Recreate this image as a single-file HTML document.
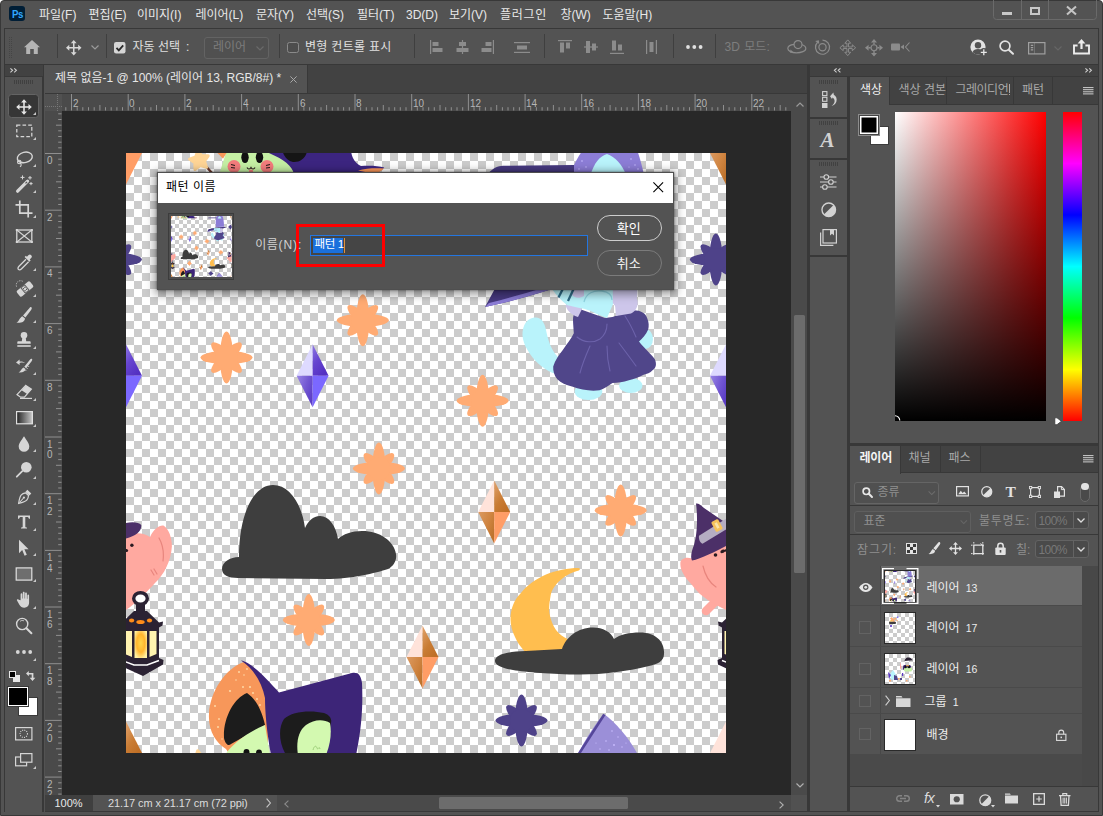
<!DOCTYPE html>
<html lang="ko"><head><meta charset="utf-8"><title>Photoshop - 패턴 이름</title>
<style>
html,body{margin:0;padding:0;background:#fff}
body{width:1103px;height:816px;overflow:hidden;position:relative;font-family:"Liberation Sans","Noto Sans CJK KR",sans-serif;font-size:12px;color:#ddd}
#win{position:absolute;left:0;top:0;width:1103px;height:816px;overflow:hidden}
#win div{position:absolute;box-sizing:border-box}
#win svg{position:absolute;overflow:visible}
#win .t{white-space:nowrap;line-height:1.2}
#win .rl{font-size:11.5px;color:#b6b6b6;line-height:1;transform:scaleX(.86);transform-origin:0 0}
</style></head>
<body>
<div id="win">
<div style="left:0px;top:0px;width:1103px;height:816px;background:#535353;border:1px solid #383838;border-right-width:1.500px;border-radius:4px 4px 0 0"></div>
<div style="left:9px;top:6px;width:16px;height:15px;background:#001e36;border-radius:3px"><div class="t" style="left:3.300px;top:2px;font-size:10.500px;font-weight:bold;color:#31a8ff;letter-spacing:-0.5px;transform:scaleX(.92);transform-origin:0 0">Ps</div></div>
<div class="t" style="left:39px;top:7.8px;font-size:12px;color:#e8e8e8;">파일(F)</div>
<div class="t" style="left:88.5px;top:7.8px;font-size:12px;color:#e8e8e8;">편집(E)</div>
<div class="t" style="left:137px;top:7.8px;font-size:12px;color:#e8e8e8;">이미지(I)</div>
<div class="t" style="left:195.5px;top:7.8px;font-size:12px;color:#e8e8e8;">레이어(L)</div>
<div class="t" style="left:256px;top:7.8px;font-size:12px;color:#e8e8e8;">문자(Y)</div>
<div class="t" style="left:306px;top:7.8px;font-size:12px;color:#e8e8e8;">선택(S)</div>
<div class="t" style="left:357px;top:7.8px;font-size:12px;color:#e8e8e8;">필터(T)</div>
<div class="t" style="left:406px;top:7.8px;font-size:12px;color:#e8e8e8;">3D(D)</div>
<div class="t" style="left:449px;top:7.8px;font-size:12px;color:#e8e8e8;">보기(V)</div>
<div class="t" style="left:500px;top:7.8px;font-size:12px;color:#e8e8e8;letter-spacing:0.7px">플러그인</div>
<div class="t" style="left:560.5px;top:7.8px;font-size:12px;color:#e8e8e8;">창(W)</div>
<div class="t" style="left:602.5px;top:7.8px;font-size:12px;color:#e8e8e8;">도움말(H)</div>
<div style="left:993px;top:-1px;width:103.5px;height:21px;border:1px solid #6a6a6a;border-radius:0 0 3.500px 3.500px"></div>
<div style="left:1021px;top:0px;width:1px;height:19px;background:#6a6a6a"></div>
<div style="left:1048px;top:0px;width:1px;height:19px;background:#6a6a6a"></div>
<div style="left:1001.5px;top:11.5px;width:10.5px;height:3px;background:#c8c8c8"></div>
<div style="left:1029.5px;top:7px;width:10.5px;height:7.5px;border:2px solid #c8c8c8;border-top-width:2.5px"></div>
<svg style="left:1066px;top:6px" width="11" height="9" viewBox="0 0 11 9"><path d="M1 0.5L10 8.5M10 0.5L1 8.5" stroke="#c4c4c4" stroke-width="2.100" fill="none"/></svg>
<div style="left:4px;top:28px;width:1095px;height:37px;border:1px solid #383838;background:#535353"></div>
<svg style="left:9px;top:37px" width="3" height="21" viewBox="0 0 3 21"><path d="M0.5 0v21M2.5 0v21" stroke="#454545" stroke-width="1" stroke-dasharray="1 1"/></svg>
<div style="left:57px;top:34px;width:1px;height:24px;background:#3f3f3f"></div>
<div style="left:106px;top:34px;width:1px;height:24px;background:#3f3f3f"></div>
<div style="left:279px;top:34px;width:1px;height:24px;background:#3f3f3f"></div>
<div style="left:414px;top:34px;width:1px;height:24px;background:#3f3f3f"></div>
<div style="left:543.5px;top:34px;width:1px;height:24px;background:#3f3f3f"></div>
<div style="left:672.5px;top:34px;width:1px;height:24px;background:#3f3f3f"></div>
<div style="left:715px;top:34px;width:1px;height:24px;background:#3f3f3f"></div>
<svg style="left:24px;top:40px" width="16" height="14" viewBox="0 0 16 14"><path d="M8 0L16 7.2h-2.2V14H9.8V9H6.2v5H2.2V7.2H0z" fill="#b4b4b4"/></svg>
<svg style="left:65.5px;top:39.5px" width="15.5" height="15.5" viewBox="0 0 16 16"><path d="M8 0l3 3.4H8.8v3.8h3.8V5L16 8l-3.4 3V8.8H8.8v3.8H11L8 16l-3-3.4h2.2V8.8H3.4V11L0 8l3.4-3v2.2h3.8V3.4H5z" fill="#d8d8d8"/></svg>
<svg style="left:90.5px;top:45px" width="8" height="5" viewBox="0 0 8 5"><path d="M0.5 0.5L4 4l3.5-3.5" stroke="#9a9a9a" stroke-width="1.2" fill="none"/></svg>
<svg style="left:114px;top:41.5px" width="11.5" height="11.5" viewBox="0 0 12 12"><rect width="12" height="12" rx="2.2" fill="#d6d6d6"/><path d="M2.6 6.2l2.4 2.5 4.6-5.2" stroke="#2a2a2a" stroke-width="1.9" fill="none"/></svg>
<div class="t" style="left:132.500px;top:39.500px;font-size:12px;color:#e0e0e0;">자동 선택</div>
<div class="t" style="left:186px;top:39.500px;font-size:12px;color:#e0e0e0;">:</div>
<div style="left:204px;top:37px;width:64.5px;height:21.5px;border:1px solid #636363;border-radius:3px;background:#505050"></div>
<div class="t" style="left:213px;top:40px;font-size:12px;color:#7c7c7c;">레이어</div>
<svg style="left:256px;top:45.5px" width="8" height="5" viewBox="0 0 8 5"><path d="M0.5 0.5L4 4l3.5-3.5" stroke="#6a6a6a" stroke-width="1.2" fill="none"/></svg>
<div style="left:287px;top:41.5px;width:11.5px;height:11.5px;border:1px solid #8a8a8a;border-radius:2.5px;background:#4d4d4d"></div>
<div class="t" style="left:305px;top:39.500px;font-size:12px;color:#e0e0e0;letter-spacing:0.3px">변형 컨트롤 표시</div>
<svg style="left:430px;top:40px" width="13" height="14" viewBox="0 0 13 14"><rect x="0" y="0" width="1.2" height="14" fill="#8c8c8c"/><rect x="2.5" y="2" width="6" height="4" fill="#8c8c8c"/><rect x="2.5" y="8" width="10" height="4" fill="#8c8c8c"/></svg>
<svg style="left:456px;top:40px" width="13" height="14" viewBox="0 0 13 14"><rect x="5.9" y="0" width="1.2" height="14" fill="#8c8c8c"/><rect x="3" y="2" width="7" height="4" fill="#8c8c8c"/><rect x="0.5" y="8" width="12" height="4" fill="#8c8c8c"/></svg>
<svg style="left:481px;top:40px" width="13" height="14" viewBox="0 0 13 14"><rect x="11.8" y="0" width="1.2" height="14" fill="#8c8c8c"/><rect x="4.5" y="2" width="6" height="4" fill="#8c8c8c"/><rect x="0.5" y="8" width="10" height="4" fill="#8c8c8c"/></svg>
<svg style="left:514px;top:42px" width="16" height="11" viewBox="0 0 16 11"><rect x="0" y="0" width="16" height="1.2" fill="#8c8c8c"/><rect x="3" y="3.5" width="10" height="4" fill="#8c8c8c"/><rect x="0" y="9.8" width="16" height="1.2" fill="#8c8c8c"/></svg>
<svg style="left:558px;top:40px" width="14" height="14" viewBox="0 0 14 14"><rect x="0" y="0" width="14" height="1.2" fill="#8c8c8c"/><rect x="2" y="2.5" width="4" height="10" fill="#8c8c8c"/><rect x="8" y="2.5" width="4" height="6" fill="#8c8c8c"/></svg>
<svg style="left:584px;top:40px" width="14" height="14" viewBox="0 0 14 14"><rect x="0" y="6.4" width="14" height="1.2" fill="#8c8c8c"/><rect x="2" y="1" width="4" height="12" fill="#8c8c8c"/><rect x="8" y="3.5" width="4" height="7" fill="#8c8c8c"/></svg>
<svg style="left:610px;top:40px" width="14" height="14" viewBox="0 0 14 14"><rect x="0" y="12.8" width="14" height="1.2" fill="#8c8c8c"/><rect x="2" y="0.5" width="4" height="10" fill="#8c8c8c"/><rect x="8" y="4.5" width="4" height="6" fill="#8c8c8c"/></svg>
<svg style="left:645.5px;top:40px" width="11" height="14" viewBox="0 0 11 14"><rect x="0" y="0" width="1.2" height="14" fill="#8c8c8c"/><rect x="3.5" y="2" width="4" height="10" fill="#8c8c8c"/><rect x="9.8" y="0" width="1.2" height="14" fill="#8c8c8c"/></svg>
<svg style="left:685.5px;top:45px" width="17" height="4" viewBox="0 0 17 4"><circle cx="2" cy="2" r="1.9" fill="#e0e0e0"/><circle cx="8.3" cy="2" r="1.9" fill="#e0e0e0"/><circle cx="14.6" cy="2" r="1.9" fill="#e0e0e0"/></svg>
<div class="t" style="left:724.500px;top:39.500px;font-size:12px;color:#7e7e7e;word-spacing:1px">3D 모드</div>
<div class="t" style="left:766.500px;top:39.500px;font-size:12px;color:#7e7e7e;">:</div>
<svg style="left:786.500px;top:40px" width="19.500" height="14" viewBox="0 0 19.500 14" fill="none" stroke="#8b8b8b" stroke-width="1.200"><circle cx="11" cy="4.600" r="4"/><path d="M7.200 4.400C3.500 4.800 .8 6.600 .8 8.600c0 2.400 3.800 4.200 8.600 4.200s9.400-1.600 9.400-4.400c0-1.500-1.400-2.800-3.800-3.600"/><path d="M3.500 9.500l-.4 3.300 3.300-.6z" fill="#8b8b8b" stroke="none"/></svg>
<svg style="left:813.500px;top:38.500px" width="17" height="16" viewBox="0 0 17 16" fill="none" stroke="#8b8b8b" stroke-width="1.200"><path d="M3.600 3.200A7 7 0 1 0 8.500 1.200"/><circle cx="8.500" cy="8.300" r="3.600"/><path d="M1.200 2l3.700-.8.300 3.700z" fill="#8b8b8b" stroke="none"/></svg>
<svg style="left:838.500px;top:38.500px" width="17.500" height="17.500" viewBox="0 0 16 16"><path d="M8 0l3 3.400H8.800v3.800h3.800V5L16 8l-3.400 3V8.800H8.800v3.800H11L8 16l-3-3.400h2.200V8.800H3.400V11L0 8l3.400-3v2.200h3.800V3.400H5z" fill="none" stroke="#8b8b8b" stroke-width="1" stroke-linejoin="round" transform="translate(.8 .8) scale(.9)"/></svg>
<svg style="left:865px;top:38.500px" width="18" height="17.500" viewBox="0 0 18 17.500" fill="#8b8b8b"><path d="M9 0l3 3.600H6zM9 17.500l3-3.600H6zM0 8.750l3.600-3v6zM18 8.750l-3.600-3v6z"/><circle cx="9" cy="8.750" r="3" fill="none" stroke="#8b8b8b" stroke-width="1.200"/><path d="M9 3.600v2M9 11.900v2M3.600 8.750h2M12.400 8.750h2" stroke="#8b8b8b" stroke-width="1.400"/></svg>
<svg style="left:890.500px;top:42px" width="19" height="10" viewBox="0 0 19 10"><rect x="0" y="1.500" width="9" height="7" rx="1" fill="#8b8b8b"/><path d="M9.500 5L13 2.500v5z" fill="#8b8b8b"/><path d="M18.500 .5L14.500 5l4 4.500" fill="none" stroke="#8b8b8b" stroke-width="1.100"/></svg>
<svg style="left:969.500px;top:38.500px" width="18" height="17.500" viewBox="0 0 18 17.500"><circle cx="8" cy="8" r="7.600" fill="#e2e2e2"/><circle cx="8" cy="6.200" r="3.200" fill="#535353"/><path d="M2.600 13.300c.6-2.400 2.800-3.300 5.400-3.300s4.800.9 5.400 3.300A7.500 7.500 0 0 1 8 15.600a7.500 7.500 0 0 1-5.400-2.300z" fill="#535353"/><circle cx="13.800" cy="13.300" r="4.200" fill="#535353"/><path d="M13.800 10.300v6M10.800 13.300h6" stroke="#e8e8e8" stroke-width="1.300"/></svg>
<svg style="left:999px;top:40px" width="15" height="14.500" viewBox="0 0 15 14.500"><circle cx="6" cy="6" r="4.900" fill="none" stroke="#e2e2e2" stroke-width="1.700"/><path d="M9.700 9.700l4.300 4" stroke="#e2e2e2" stroke-width="2" stroke-linecap="round"/></svg>
<svg style="left:1027.500px;top:41.500px" width="17.500" height="12.500" viewBox="0 0 17.500 12.500"><rect x=".6" y=".6" width="16.300" height="11.300" fill="none" stroke="#a0a0a0" stroke-width="1.200"/><path d="M2.800 3.300h2.400M2.800 5.600h2.400M2.800 7.900h2.400" stroke="#a0a0a0" stroke-width="1.200"/><path d="M6.500 .6v11.300" stroke="#a0a0a0" stroke-width="0.800" opacity=".5"/></svg>
<svg style="left:1053.500px;top:45.500px" width="8" height="5" viewBox="0 0 8 5"><path d="M.5.5L4 4 7.500.5" stroke="#666" stroke-width="1.200" fill="none"/></svg>
<svg style="left:1072.500px;top:38.500px" width="17" height="15.500" viewBox="0 0 17 15.500"><path d="M4.600 6.500H1v8h15v-8h-3.600" fill="none" stroke="#ececec" stroke-width="1.900"/><path d="M8.500 0L12.400 4.400H9.600V10H7.400V4.400H4.600z" fill="#ececec"/></svg>
<div style="left:4px;top:64px;width:40px;height:748px;border-left:1px solid #383838;border-right:2px solid #383838;background:#535353"></div>
<div style="left:5px;top:64px;width:38px;height:12px;background:#424242;border-top:1px solid #383838"></div>
<div style="left:5px;top:76px;width:38px;height:1px;background:#383838"></div>
<svg style="left:10px;top:68.3px" width="7.5" height="4.6" viewBox="0 0 7.5 4.6"><path d="M0.4 0.3L2.6 2.3 0.4 4.3M4.2 0.3L6.4 2.3 4.2 4.3" stroke="#d0d0d0" stroke-width="1.1" fill="none"/></svg>
<svg style="left:14px;top:80px" width="19" height="4" viewBox="0 0 19 4"><path d="M0 2h19" stroke="#404040" stroke-width="4" stroke-dasharray="1 1"/></svg>
<div style="left:7.7px;top:93.7px;width:31.6px;height:24.8px;background:#363636;border:1px solid #646464;border-radius:3.500px"></div>
<svg style="left:13.5px;top:96.5px" width="20" height="20" viewBox="0 0 20 20" fill="none" stroke="none"><path transform="translate(2.2,2.2) scale(0.975)" d="M8 0l3 3.4H8.8v3.8h3.8V5L16 8l-3.400 3V8.800H8.800v3.800H11L8 16l-3-3.400h2.200V8.800H3.400V11L0 8l3.400-3v2.200h3.800V3.400H5z" fill="#e6e6e6"/></svg>
<svg style="left:33px;top:112.0px" width="3" height="3" viewBox="0 0 3 3"><path d="M3 0v3H0z" fill="#c8c8c8"/></svg>
<svg style="left:13.5px;top:121.4px" width="20" height="20" viewBox="0 0 20 20" fill="none" stroke="none"><rect x="2.8" y="4" width="15" height="11.6" stroke="#d6d6d6" stroke-width="1.250" stroke-dasharray="3.6 2.1"/></svg>
<svg style="left:33px;top:136.9px" width="3" height="3" viewBox="0 0 3 3"><path d="M3 0v3H0z" fill="#c8c8c8"/></svg>
<svg style="left:13.5px;top:148.8px" width="20" height="20" viewBox="0 0 20 20" fill="none" stroke="none"><ellipse cx="10.8" cy="8.4" rx="7.6" ry="5.2" transform="rotate(-14 10.8 8.4)" stroke="#d6d6d6" stroke-width="1.4"/><circle cx="5.2" cy="13" r="1.7" stroke="#d6d6d6" stroke-width="1.1"/><path d="M6.4 14.2c1 1 1.2 2.400-.4 3.600" stroke="#d6d6d6" stroke-width="1.1"/></svg>
<svg style="left:33px;top:164.3px" width="3" height="3" viewBox="0 0 3 3"><path d="M3 0v3H0z" fill="#c8c8c8"/></svg>
<svg style="left:13.5px;top:174.0px" width="20" height="20" viewBox="0 0 20 20" fill="none" stroke="none"><path d="M3.600 17.200L13.600 7.200" stroke="#d6d6d6" stroke-width="3.2" stroke-linecap="round"/><path d="M11.500 9.300l1.500-1.500" stroke="#535353" stroke-width="1.200"/><path d="M8.500 1.400v4M6.500 3.400h4M16 2v3.600M14.200 3.800h3.600M17 8v3.200M15.400 9.600h3.200" stroke="#d6d6d6" stroke-width="1"/></svg>
<svg style="left:33px;top:189.5px" width="3" height="3" viewBox="0 0 3 3"><path d="M3 0v3H0z" fill="#c8c8c8"/></svg>
<svg style="left:13.5px;top:199.0px" width="20" height="20" viewBox="0 0 20 20" fill="none" stroke="none"><path d="M5.800 1.500v12.700h12.700M1.500 5.800h12.700v12.700" stroke="#d6d6d6" stroke-width="1.700"/></svg>
<svg style="left:33px;top:214.5px" width="3" height="3" viewBox="0 0 3 3"><path d="M3 0v3H0z" fill="#c8c8c8"/></svg>
<svg style="left:13.5px;top:225.8px" width="20" height="20" viewBox="0 0 20 20" fill="none" stroke="none"><rect x="2.800" y="4" width="15" height="12" stroke="#d6d6d6" stroke-width="1.300"/><path d="M2.800 4l15 12M17.800 4l-15 12" stroke="#d6d6d6" stroke-width="1.100"/><rect x="1.800" y="3" width="2" height="2" fill="#d6d6d6"/><rect x="16.800" y="3" width="2" height="2" fill="#d6d6d6"/><rect x="1.800" y="15" width="2" height="2" fill="#d6d6d6"/><rect x="16.800" y="15" width="2" height="2" fill="#d6d6d6"/></svg>
<svg style="left:13.5px;top:252.0px" width="20" height="20" viewBox="0 0 20 20" fill="none" stroke="none"><path d="M12 7.200L5 14.200c-1 1-1.400 2.400-.6 3.200s2.200.4 3.200-.6l7-7" stroke="#d6d6d6" stroke-width="1.300"/><path d="M10.600 5l4.800 4.800 1.300-1.300-1-1 1.700-1.700a2 2 0 0 0-2.800-2.800L12.900 4.700l-1-1z" fill="#d6d6d6"/></svg>
<svg style="left:33px;top:267.5px" width="3" height="3" viewBox="0 0 3 3"><path d="M3 0v3H0z" fill="#c8c8c8"/></svg>
<svg style="left:13.5px;top:278.0px" width="20" height="20" viewBox="0 0 20 20" fill="none" stroke="none"><g transform="rotate(-40 11 11)"><rect x="2.500" y="7.200" width="17" height="7.600" rx="1.600" fill="#d6d6d6"/><rect x="8.200" y="7.200" width="5.600" height="7.600" fill="#535353"/><rect x="9" y="8" width="4" height="6" fill="#d6d6d6"/><circle cx="10" cy="9.700" r=".7" fill="#535353"/><circle cx="12" cy="9.700" r=".7" fill="#535353"/><circle cx="10" cy="12.300" r=".7" fill="#535353"/><circle cx="12" cy="12.300" r=".7" fill="#535353"/></g><path d="M2.500 8.500A4.300 4.300 0 0 1 9 3.500" stroke="#d6d6d6" stroke-width="1" stroke-dasharray="1 1.300"/></svg>
<svg style="left:33px;top:293.5px" width="3" height="3" viewBox="0 0 3 3"><path d="M3 0v3H0z" fill="#c8c8c8"/></svg>
<svg style="left:13.5px;top:304.7px" width="20" height="20" viewBox="0 0 20 20" fill="none" stroke="none"><path d="M17.300 2.300c.9.600.6 1.500-.2 2.600L11.400 12.600l-2.400-2 6.300-7.400c.8-1 1.400-1.400 2-.9z" fill="#d6d6d6"/><path d="M8.300 11.200l2.700 2.300c-.3 3-3.200 4.700-8.600 4.200 2.600-1.200 2.800-4.500 5.900-6.500z" fill="#d6d6d6"/></svg>
<svg style="left:33px;top:320.2px" width="3" height="3" viewBox="0 0 3 3"><path d="M3 0v3H0z" fill="#c8c8c8"/></svg>
<svg style="left:13.5px;top:330.2px" width="20" height="20" viewBox="0 0 20 20" fill="none" stroke="none"><circle cx="10" cy="5.300" r="3.300" fill="#d6d6d6"/><path d="M8.300 7.500h3.400l.5 3.700h3.300c.8 0 1.200.5 1.200 1.200v1.400H3.300v-1.400c0-.7.400-1.200 1.200-1.200h3.300z" fill="#d6d6d6"/><rect x="3.300" y="15.200" width="13.400" height="1.600" fill="#d6d6d6"/></svg>
<svg style="left:33px;top:345.7px" width="3" height="3" viewBox="0 0 3 3"><path d="M3 0v3H0z" fill="#c8c8c8"/></svg>
<svg style="left:13.5px;top:356.4px" width="20" height="20" viewBox="0 0 20 20" fill="none" stroke="none"><path d="M17.800 2.800c.8.600.5 1.400-.2 2.400l-5.400 7-1.900-1.500 5.600-7c.7-.9 1.300-1.300 1.900-.9z" fill="#d6d6d6"/><path d="M9.500 11.400l2.100 1.700c-.4 2.200-2.400 3.700-7 3.400 2.200-1 2.400-3.500 4.900-5.100z" fill="#d6d6d6"/><path d="M2 6.500l3.600-3v2c2.200-.3 4.200.2 5.500 1.500-1.700-.7-3.500-.7-5.500-.1v2z" fill="#d6d6d6"/><path d="M15 10l-3.500 5" stroke="#d6d6d6" stroke-width="1" stroke-dasharray="1 1.400"/></svg>
<svg style="left:33px;top:371.9px" width="3" height="3" viewBox="0 0 3 3"><path d="M3 0v3H0z" fill="#c8c8c8"/></svg>
<svg style="left:13.5px;top:382.3px" width="20" height="20" viewBox="0 0 20 20" fill="none" stroke="none"><path d="M11.800 3.400l5.600 3.800-7 8H6.600L3 12.600z" stroke="#d6d6d6" stroke-width="1.200"/><path d="M11.800 3.400l5.600 3.800-4.200 4.800-5.600-3.800z" fill="#d6d6d6"/><path d="M6 16.400h12" stroke="#d6d6d6" stroke-width="1.200"/></svg>
<svg style="left:33px;top:397.8px" width="3" height="3" viewBox="0 0 3 3"><path d="M3 0v3H0z" fill="#c8c8c8"/></svg>
<svg style="left:15.500px;top:410.800px" width="17" height="13.400" viewBox="0 0 17 13.400"><defs><linearGradient id="tg"><stop offset="0" stop-color="#222"/><stop offset="1" stop-color="#c8c8c8"/></linearGradient></defs><rect x=".6" y=".6" width="15.800" height="12.200" fill="url(#tg)" stroke="#e0e0e0" stroke-width="1.200"/></svg>
<svg style="left:33px;top:423.500px" width="3" height="3" viewBox="0 0 3 3"><path d="M3 0v3H0z" fill="#c8c8c8"/></svg>
<svg style="left:13.5px;top:433.6px" width="20" height="20" viewBox="0 0 20 20" fill="none" stroke="none"><path d="M10 2.200c2.200 3.600 5.300 6.800 5.300 10.200a5.300 5.300 0 0 1-10.600 0c0-3.400 3.100-6.600 5.300-10.200z" fill="#d6d6d6"/></svg>
<svg style="left:33px;top:449.1px" width="3" height="3" viewBox="0 0 3 3"><path d="M3 0v3H0z" fill="#c8c8c8"/></svg>
<svg style="left:13.5px;top:460.4px" width="20" height="20" viewBox="0 0 20 20" fill="none" stroke="none"><circle cx="12.300" cy="7.200" r="5.300" fill="#d6d6d6"/><path d="M8.300 11.200L2.800 16.700" stroke="#d6d6d6" stroke-width="1.800" stroke-linecap="round"/></svg>
<svg style="left:33px;top:475.9px" width="3" height="3" viewBox="0 0 3 3"><path d="M3 0v3H0z" fill="#c8c8c8"/></svg>
<svg style="left:13.5px;top:486.6px" width="20" height="20" viewBox="0 0 20 20" fill="none" stroke="none"><g transform="rotate(222 10 10.500)"><path d="M10 2.500c2.600 3.800 3.800 6.300 3.800 8.200 0 1.800-1 3.300-1.800 4.300H8c-.8-1-1.800-2.500-1.800-4.300 0-1.900 1.200-4.400 3.800-8.200z" stroke="#d6d6d6" stroke-width="1.200"/><path d="M10 4v5.500" stroke="#d6d6d6" stroke-width="1"/><circle cx="10" cy="10.400" r="1.100" fill="#d6d6d6"/><rect x="7.300" y="15.600" width="5.400" height="2.800" fill="#d6d6d6"/></g></svg>
<svg style="left:33px;top:502.1px" width="3" height="3" viewBox="0 0 3 3"><path d="M3 0v3H0z" fill="#c8c8c8"/></svg>
<svg style="left:13.5px;top:512.3px" width="20" height="20" viewBox="0 0 20 20" fill="none" stroke="none"><path d="M4 3.500h12v3.300h-1.100c-.2-1.500-.6-1.900-2-1.900h-1.600v9.300c0 1.100.4 1.300 1.700 1.400v.9H7v-.9c1.300-.1 1.700-.3 1.700-1.400V4.900H7.100c-1.400 0-1.800.4-2 1.900H4z" fill="#d6d6d6"/></svg>
<svg style="left:33px;top:527.8px" width="3" height="3" viewBox="0 0 3 3"><path d="M3 0v3H0z" fill="#c8c8c8"/></svg>
<svg style="left:13.5px;top:537.7px" width="20" height="20" viewBox="0 0 20 20" fill="none" stroke="none"><path d="M5 1.800l9.600 9.400h-4.200l2.400 5.600-2.200.9-2.400-5.600L5 15.200z" fill="#d6d6d6"/></svg>
<svg style="left:33px;top:553.2px" width="3" height="3" viewBox="0 0 3 3"><path d="M3 0v3H0z" fill="#c8c8c8"/></svg>
<svg style="left:13.5px;top:563.5px" width="20" height="20" viewBox="0 0 20 20" fill="none" stroke="none"><rect x="2.200" y="3.900" width="15.600" height="12.200" fill="#6e6e6e" stroke="#e0e0e0" stroke-width="1.200"/></svg>
<svg style="left:33px;top:579.0px" width="3" height="3" viewBox="0 0 3 3"><path d="M3 0v3H0z" fill="#c8c8c8"/></svg>
<svg style="left:13.5px;top:590.0px" width="20" height="20" viewBox="0 0 20 20" fill="none" stroke="none"><path d="M6.600 10.200V4.300c0-1.300 1.700-1.300 1.700 0v4.200h.5V2.900c0-1.400 1.800-1.400 1.800 0v5.500h.5V3.600c0-1.400 1.800-1.400 1.800 0v5.200h.5V5.400c0-1.300 1.700-1.300 1.700 0v7.200c0 3-1.800 5.200-4.800 5.200-2.400 0-3.700-1-4.900-3L3 10.600c-.6-1.100.8-2 1.700-.9z" fill="#d6d6d6"/></svg>
<svg style="left:33px;top:605.5px" width="3" height="3" viewBox="0 0 3 3"><path d="M3 0v3H0z" fill="#c8c8c8"/></svg>
<svg style="left:13.5px;top:616.0px" width="20" height="20" viewBox="0 0 20 20" fill="none" stroke="none"><circle cx="8.200" cy="8" r="5.600" stroke="#d6d6d6" stroke-width="1.400"/><path d="M12.400 12.200l5 5" stroke="#d6d6d6" stroke-width="2" stroke-linecap="round"/><path d="M6 5.300a3.600 3.600 0 0 1 4 -.5" stroke="#d6d6d6" stroke-width=".8"/></svg>
<svg style="left:13.5px;top:642.0px" width="20" height="20" viewBox="0 0 20 20" fill="none" stroke="none"><circle cx="3.800" cy="10" r="1.900" fill="#d6d6d6"/><circle cx="10" cy="10" r="1.900" fill="#d6d6d6"/><circle cx="16.200" cy="10" r="1.900" fill="#d6d6d6"/></svg>
<svg style="left:33px;top:657.5px" width="3" height="3" viewBox="0 0 3 3"><path d="M3 0v3H0z" fill="#c8c8c8"/></svg>
<div style="left:9px;top:671px;width:7px;height:7px;background:#000;border:1px solid #e6e6e6;z-index:2"></div>
<div style="left:12.5px;top:674.5px;width:7px;height:7px;background:#e6e6e6"></div>
<svg style="left:26px;top:670.500px" width="10.500" height="10.500" viewBox="0 0 10.500 10.500"><path d="M0 2.600L2.800 0v1.900h4.600v4.800h1.900L6.500 10 3.700 6.700h2V3.500H2.800v1.800z" fill="#d8d8d8"/></svg>
<div style="left:18px;top:696.5px;width:20px;height:19.5px;background:#fff;border:1px solid #3a3a3a"></div>
<div style="left:8px;top:686.5px;width:20px;height:19.5px;background:#000;border:1px solid #fff;outline:1px solid #3a3a3a"></div>
<svg style="left:15px;top:727px" width="17.500" height="13.500" viewBox="0 0 17.500 13.500"><rect x=".6" y=".6" width="16.300" height="12.300" stroke="#d6d6d6" stroke-width="1.200" fill="none"/><circle cx="8.750" cy="6.750" r="3.700" stroke="#d6d6d6" stroke-width="1.100" stroke-dasharray="1 1.200" fill="none"/></svg>
<svg style="left:15px;top:753px" width="17.500" height="13.500" viewBox="0 0 17.500 13.500"><rect x=".6" y="4" width="11" height="8.800" stroke="#d6d6d6" stroke-width="1.200" fill="none"/><rect x="5.600" y=".6" width="11.300" height="8.600" stroke="#d6d6d6" stroke-width="1.200" fill="#535353"/></svg>
<svg style="left:33px;top:766px" width="3" height="3" viewBox="0 0 3 3"><path d="M3 0v3H0z" fill="#c8c8c8"/></svg>
<div style="left:45px;top:64px;width:762px;height:30px;background:#424242;border-top:1px solid #383838;border-bottom:1px solid #383838"></div>
<div style="left:807px;top:64px;width:3px;height:748px;background:#383838"></div>
<div style="left:45px;top:65px;width:262.5px;height:28px;background:#535353;border-right:1px solid #383838"></div>
<div class="t" style="left:55px;top:71px;font-size:12px;color:#e6e6e6;">제목 없음-1 @ 100% (레이어 13, RGB/8#) *</div>
<svg style="left:289.500px;top:76px" width="7" height="7" viewBox="0 0 7 7"><path d="M.4.4l6.200 6.200M6.600.4L.4 6.600" stroke="#a8a8a8" stroke-width="1"/></svg>
<div style="left:45px;top:94px;width:762px;height:701px;background:#282828"></div>
<div style="left:45px;top:94px;width:746px;height:17px;background:#4a4a4a"></div>
<div style="left:45px;top:94px;width:17px;height:701px;background:#4a4a4a"></div>
<div style="left:45px;top:94px;width:16.5px;height:16.5px;background:#515151"></div>
<svg style="left:45px;top:94px" width="17" height="17" viewBox="0 0 17 17"><path d="M0 12.500h17M12.500 0v17" stroke="#777" stroke-width="1" stroke-dasharray="1 1"/></svg>
<svg style="left:62px;top:94px" width="729" height="17" viewBox="0 0 729 17"><path d="M3.8 13.2V16.500M9.5 0V16.500M15.2 13.2V16.500M20.8 13.2V16.500M26.5 13.2V16.500M32.2 13.2V16.500M37.900 11V16.500M43.500 13.2V16.500M49.200 13.2V16.500M54.900 13.2V16.500M60.500 13.2V16.500M66.200 0V16.500M71.900 13.2V16.500M77.500 13.2V16.500M83.200 13.2V16.500M88.900 13.2V16.500M94.500 11V16.500M100.200 13.2V16.500M105.900 13.2V16.500M111.600 13.2V16.500M117.200 13.2V16.500M122.900 0V16.500M128.600 13.2V16.500M134.200 13.2V16.500M139.900 13.2V16.500M145.600 13.2V16.500M151.200 11V16.500M156.900 13.2V16.500M162.600 13.2V16.500M168.200 13.2V16.500M173.900 13.2V16.500M179.600 0V16.500M185.300 13.2V16.500M190.900 13.2V16.500M196.600 13.2V16.500M202.300 13.2V16.500M207.900 11V16.500M213.600 13.2V16.500M219.300 13.2V16.500M224.900 13.2V16.500M230.600 13.2V16.500M236.300 0V16.500M241.900 13.2V16.500M247.600 13.2V16.500M253.300 13.2V16.500M259.0 13.2V16.500M264.600 11V16.500M270.300 13.2V16.500M276.0 13.2V16.500M281.600 13.2V16.500M287.300 13.2V16.500M293.0 0V16.500M298.600 13.2V16.500M304.300 13.2V16.500M310.0 13.2V16.500M315.600 13.2V16.500M321.300 11V16.500M327.0 13.2V16.500M332.700 13.2V16.500M338.300 13.2V16.500M344.0 13.2V16.500M349.700 0V16.500M355.300 13.2V16.500M361.0 13.2V16.500M366.700 13.2V16.500M372.300 13.2V16.500M378.0 11V16.500M383.700 13.2V16.500M389.300 13.2V16.500M395.0 13.2V16.500M400.700 13.2V16.500M406.400 0V16.500M412.0 13.2V16.500M417.700 13.2V16.500M423.400 13.2V16.500M429.0 13.2V16.500M434.700 11V16.500M440.400 13.2V16.500M446.0 13.2V16.500M451.700 13.2V16.500M457.400 13.2V16.500M463.1 0V16.500M468.700 13.2V16.500M474.400 13.2V16.500M480.1 13.2V16.500M485.700 13.2V16.500M491.400 11V16.500M497.1 13.2V16.500M502.700 13.2V16.500M508.400 13.2V16.500M514.1 13.2V16.500M519.700 0V16.500M525.400 13.2V16.500M531.1 13.2V16.500M536.800 13.2V16.500M542.400 13.2V16.500M548.1 11V16.500M553.800 13.2V16.500M559.400 13.2V16.500M565.1 13.2V16.500M570.8 13.2V16.500M576.4 0V16.500M582.1 13.2V16.500M587.8 13.2V16.500M593.4 13.2V16.500M599.1 13.2V16.500M604.8 11V16.500M610.5 13.2V16.500M616.1 13.2V16.500M621.8 13.2V16.500M627.5 13.2V16.500M633.1 0V16.500M638.8 13.2V16.500M644.5 13.2V16.500M650.1 13.2V16.500M655.8 13.2V16.500M661.5 11V16.500M667.1 13.2V16.500M672.8 13.2V16.500M678.5 13.2V16.500M684.2 13.2V16.500M689.8 0V16.500M695.5 13.2V16.500M701.2 13.2V16.500M706.8 13.2V16.500M712.5 13.2V16.500M718.2 11V16.500M723.8 13.2V16.500" stroke="#8f8f8f" stroke-width="1" fill="none"/></svg>
<div class="t rl" style="left:72.7px;top:97.500px">2</div>
<div class="t rl" style="left:129.4px;top:97.500px">0</div>
<div class="t rl" style="left:186.1px;top:97.500px">2</div>
<div class="t rl" style="left:242.8px;top:97.500px">4</div>
<div class="t rl" style="left:299.5px;top:97.500px">6</div>
<div class="t rl" style="left:356.2px;top:97.500px">8</div>
<div class="t rl" style="left:412.9px;top:97.500px">10</div>
<div class="t rl" style="left:469.6px;top:97.500px">12</div>
<div class="t rl" style="left:526.3px;top:97.500px">14</div>
<div class="t rl" style="left:582.9px;top:97.500px">16</div>
<div class="t rl" style="left:639.6px;top:97.500px">18</div>
<div class="t rl" style="left:696.3px;top:97.500px">20</div>
<div class="t rl" style="left:753.0px;top:97.500px">22</div>
<svg style="left:45px;top:111px" width="17" height="684" viewBox="0 0 17 684"><path d="M13.2 2.8H16.500M13.2 8.5H16.500M11 14.2H16.500M13.2 19.8H16.500M13.2 25.5H16.500M13.2 31.2H16.500M13.2 36.8H16.500M0 42.5H16.500M13.2 48.2H16.500M13.2 53.8H16.500M13.2 59.5H16.500M13.2 65.2H16.500M11 70.8H16.500M13.2 76.5H16.500M13.2 82.2H16.500M13.2 87.9H16.500M13.2 93.5H16.500M0 99.2H16.500M13.2 104.9H16.500M13.2 110.5H16.500M13.2 116.2H16.500M13.2 121.9H16.500M11 127.5H16.500M13.2 133.2H16.500M13.2 138.9H16.500M13.2 144.5H16.500M13.2 150.2H16.500M0 155.9H16.500M13.2 161.6H16.500M13.2 167.2H16.500M13.2 172.9H16.500M13.2 178.6H16.500M11 184.2H16.500M13.2 189.9H16.500M13.2 195.6H16.500M13.2 201.2H16.500M13.2 206.9H16.500M0 212.6H16.500M13.2 218.2H16.500M13.2 223.9H16.500M13.2 229.6H16.500M13.2 235.3H16.500M11 240.9H16.500M13.2 246.6H16.500M13.2 252.3H16.500M13.2 257.9H16.500M13.2 263.6H16.500M0 269.3H16.500M13.2 274.9H16.500M13.2 280.6H16.500M13.2 286.3H16.500M13.2 291.9H16.500M11 297.6H16.500M13.2 303.3H16.500M13.2 309.0H16.500M13.2 314.6H16.500M13.2 320.3H16.500M0 326.0H16.500M13.2 331.6H16.500M13.2 337.3H16.500M13.2 343.0H16.500M13.2 348.6H16.500M11 354.3H16.500M13.2 360.0H16.500M13.2 365.6H16.500M13.2 371.3H16.500M13.2 377.0H16.500M0 382.7H16.500M13.2 388.3H16.500M13.2 394.0H16.500M13.2 399.7H16.500M13.2 405.3H16.500M11 411.0H16.500M13.2 416.7H16.500M13.2 422.3H16.500M13.2 428.0H16.500M13.2 433.7H16.500M0 439.4H16.500M13.2 445.0H16.500M13.2 450.7H16.500M13.2 456.4H16.500M13.2 462.0H16.500M11 467.7H16.500M13.2 473.4H16.500M13.2 479.0H16.500M13.2 484.7H16.500M13.2 490.4H16.500M0 496.0H16.500M13.2 501.7H16.500M13.2 507.4H16.500M13.2 513.1H16.500M13.2 518.7H16.500M11 524.4H16.500M13.2 530.1H16.500M13.2 535.7H16.500M13.2 541.4H16.500M13.2 547.1H16.500M0 552.7H16.500M13.2 558.4H16.500M13.2 564.1H16.500M13.2 569.7H16.500M13.2 575.4H16.500M11 581.1H16.500M13.2 586.8H16.500M13.2 592.4H16.500M13.2 598.1H16.500M13.2 603.8H16.500M0 609.4H16.500M13.2 615.1H16.500M13.2 620.8H16.500M13.2 626.4H16.500M13.2 632.1H16.500M11 637.8H16.500M13.2 643.4H16.500M13.2 649.1H16.500M13.2 654.8H16.500M13.2 660.5H16.500M0 666.1H16.500M13.2 671.8H16.500M13.2 677.5H16.500M13.2 683.1H16.500" stroke="#8f8f8f" stroke-width="1" fill="none"/></svg>
<div style="left:45px;top:111px;width:17px;height:684px;overflow:hidden"><div class="t rl" style="left:1.500px;top:44.0px">0</div><div class="t rl" style="left:1.500px;top:100.7px">2</div><div class="t rl" style="left:1.500px;top:157.4px">4</div><div class="t rl" style="left:1.500px;top:214.1px">6</div><div class="t rl" style="left:1.500px;top:270.8px">8</div><div class="t rl" style="left:1.500px;top:327.5px">1</div><div class="t rl" style="left:1.500px;top:338.1px">0</div><div class="t rl" style="left:1.500px;top:384.2px">1</div><div class="t rl" style="left:1.500px;top:394.8px">2</div><div class="t rl" style="left:1.500px;top:440.9px">1</div><div class="t rl" style="left:1.500px;top:451.5px">4</div><div class="t rl" style="left:1.500px;top:497.5px">1</div><div class="t rl" style="left:1.500px;top:508.1px">6</div><div class="t rl" style="left:1.500px;top:554.2px">1</div><div class="t rl" style="left:1.500px;top:564.8px">8</div><div class="t rl" style="left:1.500px;top:610.9px">2</div><div class="t rl" style="left:1.500px;top:621.5px">0</div><div class="t rl" style="left:1.500px;top:667.6px">2</div><div class="t rl" style="left:1.500px;top:678.2px">2</div></div>
<div style="left:791px;top:94px;width:16px;height:701px;background:#4a4a4a"></div>
<div style="left:793.5px;top:315px;width:11.5px;height:257.5px;background:#6c6c6c;border-radius:1.500px"></div>
<svg style="left:796px;top:102px" width="8" height="5" viewBox="0 0 8 5"><path d="M.5 4.500L4 1l3.500 3.500" stroke="#9a9a9a" stroke-width="1.200" fill="none"/></svg>
<svg style="left:796px;top:783px" width="8" height="5" viewBox="0 0 8 5"><path d="M.5.5L4 4 7.500.5" stroke="#b0b0b0" stroke-width="1.200" fill="none"/></svg>
<div style="left:45px;top:795px;width:762px;height:17px;background:#4a4a4a;border-bottom:1px solid #383838"></div>
<div style="left:45px;top:795px;width:48px;height:16px;background:#3f3f3f"></div>
<div style="left:93px;top:795px;width:183.5px;height:16px;background:#535353"></div>
<div style="left:791px;top:795px;width:16px;height:16px;background:#515151"></div>
<div class="t" style="left:54.500px;top:797px;font-size:11px;color:#e8e8e8">100%</div>
<div class="t" style="left:108px;top:797px;font-size:11px;color:#dcdcdc;letter-spacing:-0.1px">21.17 cm x 21.17 cm (72 ppi)</div>
<svg style="left:266px;top:798px" width="5" height="10" viewBox="0 0 5 10"><path d="M.6.6L4.400 5 .6 9.400" stroke="#c8c8c8" stroke-width="1.100" fill="none"/></svg>
<svg style="left:283.500px;top:799.500px" width="5" height="8" viewBox="0 0 5 8"><path d="M4.400.6L.8 4l3.600 3.400" stroke="#8a8a8a" stroke-width="1.100" fill="none"/></svg>
<svg style="left:778.500px;top:800.500px" width="5" height="8" viewBox="0 0 5 8"><path d="M.6.6L4.200 4 .6 7.400" stroke="#b0b0b0" stroke-width="1.100" fill="none"/></svg>
<div style="left:438.5px;top:797px;width:189.5px;height:12px;background:#6c6c6c;border-radius:1.500px"></div>
<svg width="0" height="0" style="position:absolute" aria-hidden="true"><defs><pattern id="chk" width="16" height="16" patternUnits="userSpaceOnUse"><rect width="16" height="16" fill="#fff"/><rect x="8" width="8" height="8" fill="#ccc"/><rect y="8" width="8" height="8" fill="#ccc"/></pattern><pattern id="chk4" width="8" height="8" patternUnits="userSpaceOnUse"><rect width="8" height="8" fill="#fff"/><rect x="4" width="4" height="4" fill="#ccc"/><rect y="4" width="4" height="4" fill="#ccc"/></pattern><symbol id="art" viewBox="0 0 600 600"><defs><linearGradient id="pur" x1="0" y1="0" x2="0.6" y2="1"><stop offset="0" stop-color="#8f78e4"/><stop offset=".5" stop-color="#6645d0"/><stop offset="1" stop-color="#5430c2"/></linearGradient><linearGradient id="pll" x1="0" y1="0" x2="1" y2="0.6"><stop offset="0" stop-color="#9a86e6"/><stop offset=".6" stop-color="#7257d2"/><stop offset="1" stop-color="#5d3fc6"/></linearGradient><linearGradient id="our" x1="0" y1="0" x2="0.7" y2="1"><stop offset="0" stop-color="#e2a36e"/><stop offset=".6" stop-color="#c97c34"/><stop offset="1" stop-color="#bf6f26"/></linearGradient><linearGradient id="oll" x1="0" y1="0" x2="1" y2="0.7"><stop offset="0" stop-color="#dc9a62"/><stop offset=".6" stop-color="#cf8440"/><stop offset="1" stop-color="#bd722c"/></linearGradient><radialGradient id="lg" cx=".5" cy=".45" r=".6"><stop offset="0" stop-color="#ffd54a"/><stop offset=".55" stop-color="#ffb52e"/><stop offset="1" stop-color="#fff0a0"/></radialGradient></defs><g transform="translate(100.5 204.6)" fill="#ffab73"><ellipse rx="26" ry="6.6"/><ellipse rx="6.6" ry="26"/><ellipse rx="20.8" ry="6.2" transform="rotate(45)"/><ellipse rx="20.8" ry="6.2" transform="rotate(-45)"/><circle r="11.5"/></g><g transform="translate(236.8 167.3)" fill="#ffab73"><ellipse rx="26" ry="6.6"/><ellipse rx="6.6" ry="26"/><ellipse rx="20.8" ry="6.2" transform="rotate(45)"/><ellipse rx="20.8" ry="6.2" transform="rotate(-45)"/><circle r="11.5"/></g><g transform="translate(356.6 247.7)" fill="#ffab73"><ellipse rx="26" ry="6.6"/><ellipse rx="6.6" ry="26"/><ellipse rx="20.8" ry="6.2" transform="rotate(45)"/><ellipse rx="20.8" ry="6.2" transform="rotate(-45)"/><circle r="11.5"/></g><g transform="translate(252.9 315.5)" fill="#ffab73"><ellipse rx="26" ry="6.6"/><ellipse rx="6.6" ry="26"/><ellipse rx="20.8" ry="6.2" transform="rotate(45)"/><ellipse rx="20.8" ry="6.2" transform="rotate(-45)"/><circle r="11.5"/></g><g transform="translate(494.7 357.4)" fill="#ffab73"><ellipse rx="26" ry="6.6"/><ellipse rx="6.6" ry="26"/><ellipse rx="20.8" ry="6.2" transform="rotate(45)"/><ellipse rx="20.8" ry="6.2" transform="rotate(-45)"/><circle r="11.5"/></g><g transform="translate(182.8 467)" fill="#ffab73"><ellipse rx="26" ry="6.6"/><ellipse rx="6.6" ry="26"/><ellipse rx="20.8" ry="6.2" transform="rotate(45)"/><ellipse rx="20.8" ry="6.2" transform="rotate(-45)"/><circle r="11.5"/></g><g transform="translate(395.5 567.5)" fill="#4e4289"><ellipse rx="26" ry="6.6"/><ellipse rx="6.6" ry="26"/><ellipse rx="20.8" ry="6.2" transform="rotate(45)"/><ellipse rx="20.8" ry="6.2" transform="rotate(-45)"/><circle r="11.5"/></g><g transform="translate(589.9 106.6)" fill="#4e4289"><ellipse rx="26" ry="6.6"/><ellipse rx="6.6" ry="26"/><ellipse rx="20.8" ry="6.2" transform="rotate(45)"/><ellipse rx="20.8" ry="6.2" transform="rotate(-45)"/><circle r="11.5"/></g><g transform="translate(-10.1 106.6)" fill="#4e4289"><ellipse rx="26" ry="6.6"/><ellipse rx="6.6" ry="26"/><ellipse rx="20.8" ry="6.2" transform="rotate(45)"/><ellipse rx="20.8" ry="6.2" transform="rotate(-45)"/><circle r="11.5"/></g><g transform="translate(186.6 222.8)"><path d="M0 -31.5L-16 0H0z" fill="#dedaff"/><path d="M0 -31.5L16 0H0z" fill="url(#pur)"/><path d="M-16 0L0 31.5V0z" fill="url(#pll)"/><path d="M16 0L0 31.5V0z" fill="#7b68ff"/></g><g transform="translate(0 222.8)"><path d="M0 -31.5L-16 0H0z" fill="#dedaff"/><path d="M0 -31.5L16 0H0z" fill="url(#pur)"/><path d="M-16 0L0 31.5V0z" fill="url(#pll)"/><path d="M16 0L0 31.5V0z" fill="#7b68ff"/></g><g transform="translate(600 222.8)"><path d="M0 -31.5L-16 0H0z" fill="#dedaff"/><path d="M0 -31.5L16 0H0z" fill="url(#pur)"/><path d="M-16 0L0 31.5V0z" fill="url(#pll)"/><path d="M16 0L0 31.5V0z" fill="#7b68ff"/></g><g transform="translate(368.2 359)"><path d="M0 -31.5L-16 0H0z" fill="#ffe3da"/><path d="M0 -31.5L16 0H0z" fill="url(#our)"/><path d="M-16 0L0 31.5V0z" fill="url(#oll)"/><path d="M16 0L0 31.5V0z" fill="#ff9d66"/></g><g transform="translate(296.5 504)"><path d="M0 -31.5L-16 0H0z" fill="#ffe3da"/><path d="M0 -31.5L16 0H0z" fill="url(#our)"/><path d="M-16 0L0 31.5V0z" fill="url(#oll)"/><path d="M16 0L0 31.5V0z" fill="#ff9d66"/></g><g transform="translate(0 0)"><path d="M0 -31.5L-16 0H0z" fill="#ffe3da"/><path d="M0 -31.5L16 0H0z" fill="url(#our)"/><path d="M-16 0L0 31.5V0z" fill="url(#oll)"/><path d="M16 0L0 31.5V0z" fill="#ff9d66"/></g><g transform="translate(600 0)"><path d="M0 -31.5L-16 0H0z" fill="#ffe3da"/><path d="M0 -31.5L16 0H0z" fill="url(#our)"/><path d="M-16 0L0 31.5V0z" fill="url(#oll)"/><path d="M16 0L0 31.5V0z" fill="#ff9d66"/></g><g transform="translate(0 600)"><path d="M0 -31.5L-16 0H0z" fill="#ffe3da"/><path d="M0 -31.5L16 0H0z" fill="url(#our)"/><path d="M-16 0L0 31.5V0z" fill="url(#oll)"/><path d="M16 0L0 31.5V0z" fill="#ff9d66"/></g><g transform="translate(600 600)"><path d="M0 -31.5L-16 0H0z" fill="#ffe3da"/><path d="M0 -31.5L16 0H0z" fill="url(#our)"/><path d="M-16 0L0 31.5V0z" fill="url(#oll)"/><path d="M16 0L0 31.5V0z" fill="#ff9d66"/></g><path fill="#3e3e3e" d="M113 404C104 404 96 409 96 416C96 422 102 425 112 425L200 426C225 426 250 420 262 416C268 413 271 407 270 401C268 388 254 378 236 378C226 378 217 381 212 386C210 373 203 363 194 363C187 363 182 368 179 375C176 352 164 332 147 332C128 332 113 360 113 404Z"/><path fill="#ffbe4f" d="M452.5 415C455 415.500 454 417.500 451 418C446 419.500 441 422 438 424.200C430 430 425 437 424.400 444C423 452 423 456 423.500 460.500C424.500 467 427 472.500 430 477C433 481 437 484 441.600 486L436 499L399 499C394 493 391 489 389 484C386 478 384.500 472 384.500 466C384.500 456 388 447 394.500 440.500C401 432 410 426 420 421.500C430 417.500 442 415 452.500 415Z"/><path fill="#3e3e3e" d="M369 508C369 502 380 498.500 400 498L436 496C440 484 452 474.500 467 474.500C477 474.500 485 479 488 486C494 481.500 503 479.500 514 479.500C530 479.500 539 489 538 501C538 508 532 511 523 513C500 518.500 478 521.500 454 521.500C425 521.500 400 519 387 517C375 515 369 512 369 508Z"/><path fill="#46397f" d="M359 154L372 130C420 112 500 100 548 108C520 122 470 130 426 136C400 144 380 150 359 154Z"/><path fill="#8c7dd6" d="M359 154C380 150 400 144 426 136L418 134.500C400 140 380 146 363 150Z"/><path fill="#8c7dd6" d="M448 12C452 4 456 -2 459 -6L510 -6C520 20 528 70 524 104L446 106C442 70 442 36 448 12Z"/><path fill="#b9f3fb" d="M464.500 22C468 10 474 3 481 1C489 4 496 11 500 22Z"/><path fill="#46397f" d="M363 19.500C367 15 372 13 377 12.700L448 12V19.500Z"/><path fill="#b9f3fb" d="M397 186C395 176 399 166 408 164.500C415 163.500 418.500 169 420 177C422 187 425 197 432 204L438 200L430 221C420 218 410 210 404 201C400 195 398 191 397 186Z"/><ellipse cx="462.500" cy="238.500" rx="13.800" ry="8.600" fill="#b9f3fb"/><ellipse cx="504.800" cy="232.500" rx="11.600" ry="7.600" fill="#b9f3fb"/><ellipse cx="519.500" cy="186" rx="7.500" ry="10" fill="#b9f3fb"/><path fill="#50468a" d="M447 166.500C447 160 451 156.500 455 156.400L479 165L486.400 164L506.600 157.300C514 157 520 160 521.300 165.600C523 170 523 173 522.200 176.600C520 182 516 186 513 188.600C518 195 525 201 528.700 206C531 211 530 215 526.800 217C524 220 521 221 517.600 221.700C513 224 508 226 502.900 227.200C497 229 492 230 486.400 230C482 233 478 236 473.500 237.300C465 238.500 455 237 446 233.600C440 232 435 230 431.300 226.300C428 222 427 218 427.200 213.400C429 207 433 202 436.800 196.900C441 191 445 186 447.800 180.300C447.500 175 447 170 447 166.500Z"/><g fill="none" stroke="#6c62aa" stroke-width="1.100" stroke-linecap="round"><path d="M451 184C458 190 468 190 474 186C479 182 481 176 481 171"/><path d="M464 193C460 202 456 212 454 220"/><path d="M481 193C481 202 482 210 484 218"/><path d="M493 190C499 198 505 206 510 213"/><path d="M499 163C503 169 507 177 510 184"/></g><path fill="#cdc6ea" d="M439.500 152C444 150 452 152 456 156L452 164C446 162 441 158 439.500 152ZM488 140C496 138 507 141 511.500 147C512.500 153 510 158 505 160.500L490 163Z"/><path fill="#b9f3fb" d="M424 120L488 116L487.500 150L481 164.900C474 163 466 158 458 155.800C450 154.500 445 153 441 152C436 148 430 142 426 136Z"/><path fill="#cdc6ea" d="M445 134H458V143C453 146 448 145 445 141Z"/><path d="M438.300 133l-5.800 11.500M449 133l-7 15" stroke="#2f6b86" stroke-width="2.300"/><path fill="#cdc6ea" d="M486.800 120L509.700 120C512 140 512.500 148 506 157.600C502 160 498 160 494.400 159.500L486.800 150Z"/><path d="M458 149C460 140 468 137 476 138C483 139 486 143 486 147" fill="none" stroke="#8fd5e2" stroke-width="1.300"/><path fill="#9b8fd8" d="M478 561C490 570 503 585 511.500 601L452 601C460 585 470 570 478 561Z"/><path d="M478.300 561.500L452.800 601" stroke="#55469a" stroke-width="2.600"/><g fill="#c9bdff"><circle cx="486" cy="578" r=".8"/><circle cx="492" cy="584" r=".7"/><circle cx="480" cy="588" r=".8"/><circle cx="488" cy="592" r=".9"/><circle cx="496" cy="594" r=".7"/><circle cx="474" cy="596" r=".7"/><circle cx="483" cy="597" r=".8"/><circle cx="500" cy="590" r=".6"/><circle cx="470" cy="590" r=".6"/><circle cx="456" cy="8" r=".8"/><circle cx="460" cy="14" r=".7"/><circle cx="505" cy="6" r=".8"/><circle cx="509" cy="12" r=".7"/><circle cx="512" cy="16" r=".8"/><circle cx="503" cy="14" r=".6"/><circle cx="453" cy="16" r=".7"/></g><path fill="#c5f0a4" d="M93 22L100.500 -2L150 -2C160 4 168 12 170 22Z"/><circle cx="108" cy="13.500" r="6.500" fill="#f47c7c"/><circle cx="141" cy="13.500" r="6.500" fill="#f47c7c"/><ellipse cx="119" cy="4.300" rx="3.700" ry="5.800" fill="#111"/><ellipse cx="133.500" cy="4.300" rx="3.700" ry="5.800" fill="#111"/><path d="M105 11.500l4 1M105 14.500l4 .5M140 12.500l4-1M140 15l4-.5M121 14.500c1 2 3 2 4 0c1 2 3 2 4 0" stroke="#2a1a1a" stroke-width="1.100" fill="none"/><ellipse cx="125" cy="18" rx="2.200" ry="1.600" fill="#f47c7c"/><path fill="#3c2580" d="M138 -2L225 -2C226 5 229 10 235 13C242 12.500 252 12.500 258.300 14.600C255 18 250 21 244 21L168 21C166 12 156 5 138 -2Z"/><path fill="#151515" d="M156.500 -2L181 -2C180 5 174 9.500 167 9C162 8 158 4 156.500 -2Z"/><path fill="#ff9a5c" d="M232 17.500C240 15 250 15 258 15.400C255 19 250 20.500 244 20Z"/><path d="M77 10L86 20" stroke="#6b3a2e" stroke-width="2.400"/><path d="M71.7 -2.3L75.7 2.8L82.2 2.8L78.5 8.2L80.6 14.4L74.3 12.6L69.0 16.5L68.8 9.9L63.5 6.1L69.7 3.9Z" fill="#ffd596" stroke="#ffd596" stroke-width="3" stroke-linejoin="round"/><path d="M71.7 597.7L75.7 602.8L82.2 602.8L78.5 608.2L80.6 614.4L74.3 612.6L69.0 616.5L68.8 609.9L63.5 606.1L69.7 603.9Z" fill="#ffd596" stroke="#ffd596" stroke-width="3" stroke-linejoin="round"/><path fill="#f7975a" d="M118 509C100 515 84 538 83 561C82 578 90 590 100 596L104 602L142 602L142 540C136 525 128 514 118 509Z"/><g fill="#ffd9a6"><circle cx="113" cy="519" r="1"/><circle cx="118" cy="522" r=".8"/><circle cx="121" cy="516" r=".9"/><circle cx="110" cy="527" r=".8"/><circle cx="104" cy="538" r="1.100"/><circle cx="117" cy="534" r="1"/><circle cx="124" cy="534" r="1.100"/><circle cx="127" cy="540" r="1"/><circle cx="131" cy="546" r="1"/><circle cx="134" cy="552" r=".9"/><circle cx="89" cy="553" r="1"/><circle cx="93" cy="566" r=".9"/><circle cx="92" cy="574" r="1"/><circle cx="96" cy="586" r=".7"/></g><path fill="#1c1c1c" d="M121 540C108 545 97 565 98 585C99 590 102 594 105 591L139 572C136 558 130 546 121 540Z"/><path fill="#d3f9b0" d="M99 602C105 592 120 580 139 572L144 602Z"/><path fill="#3d2578" d="M115 507.500C125 509 140 525 153 539.500L226 520C232 519 235 522 236 530C237 550 236 575 230 602L145 602C141 580 139 560 139 545C136 530 128 516 115 507.500Z"/><path fill="#1c1c1c" d="M160 602C153 590 152 575 158 566C166 558 185 557 198 560C204 562 206 566 205 570L200 602Z"/><path fill="#d3f9b0" d="M172 602C170 590 172 578 180 572C188 566 198 566 204 570C206 580 204 592 200 602Z"/><ellipse cx="120.500" cy="599.500" rx="3" ry="3.400" fill="#111"/><ellipse cx="133" cy="600" rx="3" ry="3.400" fill="#111"/><path d="M187 597c1-4 3-5 4-2s2-3 3 1" stroke="#9ed07a" stroke-width="1" fill="none"/><path fill="#f7975a" d="M91.500 0h9l-3.500 5.800z"/><g transform="translate(0 0)"><path d="M-2 440L-20 458" stroke="#ffa9a0" stroke-width="8.500" stroke-linecap="round"/><path fill="#ffa9a0" d="M-34 405.600C-40 403 -46 406 -45.600 410.500C-46 416 -42 424 -34 432C-25 445 -10 452 0 457C10 450 22 438 29 430C38 422 45 408 45.900 393.600C46 385 43 376 37.800 372.700C33 372 28 376 24 384C18 380 8 378 0 384Z"/><path fill="#4c3068" d="M-30 350.500C-28 350 -25 352 -22 355L0 370C6 368.500 13 369 15.200 372C16 378 10 383 0 385.500L0 393C-10 398 -25 406 -34 407.500C-36 404 -34 397 -32 392C-29 382 -28 366 -30 350.500Z"/><path fill="#b5adc2" d="M-27 382.800L0 365.800L0 376.400L-23.500 390.700C-26 390 -27.500 386 -27 382.800Z"/><g transform="translate(-9 372.500) rotate(-28)"><rect x="-3.800" y="-5.600" width="7.600" height="11.200" rx="1.200" fill="#f6c25b"/><rect x="-1.300" y="-3" width="2.600" height="6" fill="#fbe3a8"/></g><circle cx="-10.500" cy="402" r="1.800" fill="#2a1a20"/><ellipse cx="-3.200" cy="398.300" rx="2.600" ry="1.600" transform="rotate(-25 -3.200 398.300)" fill="#2a1a20"/><circle cx="5.900" cy="392.300" r="1.700" fill="#2a1a20"/><circle cx="0.500" cy="397.500" r="1.600" fill="#2a1a20"/><path d="M-23 413C-21 422 -16 430 -10 434M33 385C37 392 38 400 37 408M25 417l3 5M28 416l3 5" stroke="#e8857d" stroke-width="1.200" fill="none" stroke-linecap="round"/></g><g transform="translate(600 0)"><path d="M-2 440L-20 458" stroke="#ffa9a0" stroke-width="8.500" stroke-linecap="round"/><path fill="#ffa9a0" d="M-34 405.600C-40 403 -46 406 -45.600 410.500C-46 416 -42 424 -34 432C-25 445 -10 452 0 457C10 450 22 438 29 430C38 422 45 408 45.900 393.600C46 385 43 376 37.800 372.700C33 372 28 376 24 384C18 380 8 378 0 384Z"/><path fill="#4c3068" d="M-30 350.500C-28 350 -25 352 -22 355L0 370C6 368.500 13 369 15.200 372C16 378 10 383 0 385.500L0 393C-10 398 -25 406 -34 407.500C-36 404 -34 397 -32 392C-29 382 -28 366 -30 350.500Z"/><path fill="#b5adc2" d="M-27 382.800L0 365.800L0 376.400L-23.500 390.700C-26 390 -27.500 386 -27 382.800Z"/><g transform="translate(-9 372.500) rotate(-28)"><rect x="-3.800" y="-5.600" width="7.600" height="11.200" rx="1.200" fill="#f6c25b"/><rect x="-1.300" y="-3" width="2.600" height="6" fill="#fbe3a8"/></g><circle cx="-10.500" cy="402" r="1.800" fill="#2a1a20"/><ellipse cx="-3.200" cy="398.300" rx="2.600" ry="1.600" transform="rotate(-25 -3.200 398.300)" fill="#2a1a20"/><circle cx="5.900" cy="392.300" r="1.700" fill="#2a1a20"/><circle cx="0.500" cy="397.500" r="1.600" fill="#2a1a20"/><path d="M-23 413C-21 422 -16 430 -10 434M33 385C37 392 38 400 37 408M25 417l3 5M28 416l3 5" stroke="#e8857d" stroke-width="1.200" fill="none" stroke-linecap="round"/></g><g transform="translate(0 0)"><ellipse cx="14.500" cy="445.500" rx="6.800" ry="5.800" fill="#fff" stroke="#2b2233" stroke-width="3.400"/><rect x="10" y="451" width="9" height="8" fill="#2b2233"/><path fill="#2b2233" d="M8 458H21L33 469.500L37 468.500L36.500 472.500L33 474.500V505L37.500 507L37 511.500L17 523L-8 511.500L-8.500 507L-4 505V474.500L-7.500 472.500L-8 468.500L-4 469.500Z"/><ellipse cx="5.600" cy="467.500" rx="2.600" ry="2" fill="#ff8c1a"/><ellipse cx="14.500" cy="469" rx="4.200" ry="2.100" fill="#ff8c1a"/><ellipse cx="23.500" cy="467.500" rx="2.600" ry="2" fill="#ff8c1a"/><path fill="#fff3b0" d="M-1.500 478H6V504L-1.500 501ZM23.500 478H30.500V501L23.500 504Z"/><rect x="8.500" y="478" width="12.500" height="27" fill="url(#lg)"/><path d="M-4 507.500L8 512H21L33 507.500" stroke="#fff" stroke-width="1.600" fill="none"/></g><g transform="translate(600 0)"><ellipse cx="14.500" cy="445.500" rx="6.800" ry="5.800" fill="#fff" stroke="#2b2233" stroke-width="3.400"/><rect x="10" y="451" width="9" height="8" fill="#2b2233"/><path fill="#2b2233" d="M8 458H21L33 469.500L37 468.500L36.500 472.500L33 474.500V505L37.500 507L37 511.500L17 523L-8 511.500L-8.500 507L-4 505V474.500L-7.500 472.500L-8 468.500L-4 469.500Z"/><ellipse cx="5.600" cy="467.500" rx="2.600" ry="2" fill="#ff8c1a"/><ellipse cx="14.500" cy="469" rx="4.200" ry="2.100" fill="#ff8c1a"/><ellipse cx="23.500" cy="467.500" rx="2.600" ry="2" fill="#ff8c1a"/><path fill="#fff3b0" d="M-1.500 478H6V504L-1.500 501ZM23.500 478H30.500V501L23.500 504Z"/><rect x="8.500" y="478" width="12.500" height="27" fill="url(#lg)"/><path d="M-4 507.500L8 512H21L33 507.500" stroke="#fff" stroke-width="1.600" fill="none"/></g></symbol></defs></svg>
<svg style="left:126px;top:153px;overflow:hidden" width="600" height="600" viewBox="0 0 600 600"><rect width="600" height="600" fill="url(#chk)"/><use href="#art" width="600" height="600"/></svg>
<div style="left:157px;top:172px;width:517px;height:117.5px;background:#535353;border:1px solid #4f4f4f;box-shadow:0 2px 9px 2px rgba(0,0,0,.42),0 0 2px rgba(0,0,0,.5)"></div>
<div style="left:158px;top:173px;width:515px;height:30px;background:#fff"></div>
<div class="t" style="left:166px;top:180px;font-size:12px;color:#000;letter-spacing:0.5px">패턴 이름</div>
<svg style="left:653px;top:181.500px" width="10.500" height="10.500" viewBox="0 0 10.500 10.500"><path d="M.4.4l9.700 9.700M10.100.4L.4 10.100" stroke="#000" stroke-width="1.100"/></svg>
<div style="left:168px;top:213px;width:66px;height:66.5px;border:1px solid #3c3c3c;background:#4e4e4e"></div>
<svg style="left:171px;top:216px;overflow:hidden" width="60.500" height="61" viewBox="0 0 60.500 61"><rect width="61" height="61" fill="url(#chk4)"/><use href="#art" width="60.500" height="61"/></svg>
<div style="left:309.5px;top:234.5px;width:278.5px;height:21.5px;background:#454545;border:1px solid #2476e0"></div>
<div style="left:312.5px;top:237.5px;width:30.8px;height:15px;background:#1a70dc"></div>
<div class="t" style="left:314.500px;top:237.800px;font-size:11.500px;color:#fff;letter-spacing:-0.4px">패턴 1</div>
<div style="left:343.6px;top:237.5px;width:1px;height:15px;background:#e0903c"></div>
<div style="left:596.5px;top:215px;width:65.5px;height:26px;border:1.600px solid #cdcdcd;border-radius:13px"></div>
<div class="t" style="left:616.800px;top:221.200px;font-size:13px;color:#fff;">확인</div>
<div style="left:596.5px;top:250px;width:65.5px;height:25.5px;border:1px solid #7b7b7b;border-radius:13px"></div>
<div class="t" style="left:616.800px;top:256.200px;font-size:13px;color:#f2f2f2;">취소</div>
<div style="left:296px;top:224px;width:89px;height:43px;border:3.500px solid #fe0000"></div>
<div class="t" style="left:255.300px;top:238.200px;font-size:12px;color:#d2d2d2;letter-spacing:1px"><span style="letter-spacing:0.5px">이름</span>(N):</div>
<div style="left:810px;top:64px;width:289px;height:12.5px;background:#424242;border-top:1px solid #383838;border-right:1px solid #383838"></div>
<svg style="left:834px;top:68.300px" width="7.500" height="4.600" viewBox="0 0 7.500 4.600"><path d="M2.600.3L.4 2.300l2.200 2M6.400.3L4.200 2.300l2.200 2" stroke="#d0d0d0" stroke-width="1.100" fill="none"/></svg>
<svg style="left:1084.500px;top:68.300px" width="7.500" height="4.600" viewBox="0 0 7.500 4.600"><path d="M.4.3L2.600 2.300.4 4.300M4.200.3L6.400 2.300 4.200 4.300" stroke="#d0d0d0" stroke-width="1.100" fill="none"/></svg>
<div style="left:810px;top:76px;width:40px;height:736px;background:#535353;border-top:1px solid #383838;border-right:3px solid #383838;border-bottom:1px solid #383838"></div>
<div style="left:810px;top:117px;width:37px;height:1.5px;background:#383838"></div>
<div style="left:810px;top:158px;width:37px;height:1.5px;background:#383838"></div>
<div style="left:810px;top:255px;width:37px;height:1.5px;background:#383838"></div>
<svg style="left:819px;top:80px" width="19" height="4" viewBox="0 0 19 4"><path d="M0 2h19" stroke="#414141" stroke-width="4" stroke-dasharray="1 1"/></svg>
<svg style="left:819px;top:121px" width="19" height="4" viewBox="0 0 19 4"><path d="M0 2h19" stroke="#414141" stroke-width="4" stroke-dasharray="1 1"/></svg>
<svg style="left:819px;top:162px" width="19" height="4" viewBox="0 0 19 4"><path d="M0 2h19" stroke="#414141" stroke-width="4" stroke-dasharray="1 1"/></svg>
<svg style="left:821.500px;top:91px" width="15" height="17" viewBox="0 0 15 17"><rect x=".6" y=".6" width="4.300" height="4" fill="none" stroke="#d2d2d2" stroke-width="1.100"/><rect x=".6" y="6.300" width="4.300" height="4" fill="none" stroke="#d2d2d2" stroke-width="1.100"/><rect x="0" y="12" width="5.500" height="5" fill="#d2d2d2"/><path d="M8 5.200l3.400-3.700.4 2.300c2.400 1.300 3.400 4 2.600 6.700-.6 2-2.200 3.600-4.800 4.500 2-1.500 3-3.200 3-5 0-1.600-.8-2.900-2-3.600l-.6 1.600z" fill="#d2d2d2"/></svg>
<div class="t" style="left:820.500px;top:127.500px;font-family:'Liberation Serif',serif;font-style:italic;font-weight:bold;font-size:21px;color:#d2d2d2;line-height:1.150">A</div>
<svg style="left:820px;top:173.500px" width="16.500" height="16" viewBox="0 0 16.500 16" fill="none" stroke="#d2d2d2" stroke-width="1.100"><path d="M0 3h4M8.600 3h7.900M0 8h8.600M13.200 8h3.300M0 13h2.600M7.200 13h9.300"/><circle cx="6.300" cy="3" r="2.300"/><circle cx="10.900" cy="8" r="2.300"/><circle cx="4.900" cy="13" r="2.300"/></svg>
<svg style="left:821px;top:202px" width="15.500" height="15.500" viewBox="0 0 16 16"><circle cx="8" cy="8" r="7" fill="none" stroke="#d2d2d2" stroke-width="1.400"/><path d="M13 3A7 7 0 0 1 3 13z" fill="#d2d2d2"/></svg>
<svg style="left:819.500px;top:228.500px" width="17" height="17" viewBox="0 0 17 17" fill="none" stroke="#d2d2d2" stroke-width="1.200"><path d="M.6 3.600v12.800h12.800"/><rect x="3" y=".6" width="13.400" height="13.400"/><path d="M10 .6h4v6l-2-1.800-2 1.800z" fill="#d2d2d2" stroke="none"/></svg>
<div style="left:850px;top:76px;width:249px;height:368.5px;background:#535353;border-top:1px solid #383838;border-right:1px solid #383838;border-bottom:2px solid #383838"></div>
<div style="left:850px;top:77px;width:248px;height:28px;background:#424242;border-bottom:1px solid #383838"></div>
<div style="left:850px;top:77px;width:39.5px;height:28px;background:#535353;border-right:1px solid #383838"></div>
<div style="left:946px;top:77px;width:1px;height:27px;background:#383838"></div>
<div style="left:1013px;top:77px;width:1px;height:27px;background:#383838"></div>
<div style="left:1052px;top:77px;width:1px;height:27px;background:#383838"></div>
<div class="t" style="left:860px;top:82.500px;font-size:12px;color:#f2f2f2;">색상</div>
<div class="t" style="left:898.500px;top:82.500px;font-size:12px;color:#a9a9a9;">색상 견본</div>
<div class="t" style="left:955.500px;top:82.500px;font-size:12px;color:#a9a9a9;letter-spacing:-0.5px">그레이디언</div>
<div style="left:1009px;top:83.5px;width:1.2px;height:9px;background:#a9a9a9"></div>
<div style="left:1009px;top:94px;width:1.3px;height:1.4px;background:#a9a9a9"></div>
<div class="t" style="left:1022px;top:82.500px;font-size:12px;color:#a9a9a9;">패턴</div>
<svg style="left:1082.5px;top:87px" width="10.500" height="7.500" viewBox="0 0 10.500 7.500"><path d="M0 .6h10.500M0 2.700h10.500M0 4.800h10.500M0 6.900h10.500" stroke="#cfcfcf" stroke-width="1"/></svg>
<div style="left:869.5px;top:125.5px;width:19px;height:19px;background:#fff;border:1px solid #3c3c3c"></div>
<div style="left:858px;top:114px;width:22px;height:22px;background:#000;border:1px solid #8c8c8c;box-shadow:inset 0 0 0 1px #444,inset 0 0 0 2.500px #fff"></div>
<div style="left:895px;top:112px;width:151px;height:308.5px;background:linear-gradient(to bottom,rgba(0,0,0,0),#000),linear-gradient(to right,#fff,#f00)"></div>
<svg style="left:890px;top:415px" width="12" height="6" viewBox="0 0 12 6"><defs><clipPath id="cfc"><rect x="5" y="0" width="7" height="5.500"/></clipPath></defs><circle cx="5" cy="5.500" r="4.800" fill="none" stroke="#fff" stroke-width="1.100" clip-path="url(#cfc)"/></svg>
<div style="left:1063px;top:112px;width:19px;height:308.5px;background:linear-gradient(to bottom,#f00 0%,#f0f 16.670%,#00f 33.330%,#0ff 50%,#0f0 66.670%,#ff0 83.330%,#f00 100%)"></div>
<svg style="left:1053.500px;top:416.500px" width="8" height="8.500" viewBox="0 0 8 8.500"><path d="M.8.800H3L7.400 4.250 3 7.700H.8z" fill="#fff" stroke="#3a3a3a" stroke-width=".8"/></svg>
<div style="left:850px;top:445px;width:249px;height:367px;background:#535353;border-top:1px solid #383838;border-right:1px solid #383838;border-bottom:1px solid #383838"></div>
<div style="left:850px;top:446px;width:248px;height:27px;background:#424242;border-bottom:1px solid #383838"></div>
<div style="left:850px;top:446px;width:50.5px;height:27.5px;background:#535353;border-right:1px solid #383838"></div>
<div style="left:939.5px;top:446px;width:1px;height:26px;background:#383838"></div>
<div style="left:979.5px;top:446px;width:1px;height:26px;background:#383838"></div>
<div class="t" style="left:859.500px;top:450.500px;font-size:12px;font-weight:bold;color:#f4f4f4;letter-spacing:-0.2px">레이어</div>
<div class="t" style="left:908.500px;top:450.500px;font-size:12px;color:#a9a9a9;">채널</div>
<div class="t" style="left:948.500px;top:450.500px;font-size:12px;color:#a9a9a9;">패스</div>
<svg style="left:1083px;top:454.5px" width="10.500" height="7.500" viewBox="0 0 10.500 7.500"><path d="M0 .6h10.500M0 2.700h10.500M0 4.800h10.500M0 6.900h10.500" stroke="#cfcfcf" stroke-width="1"/></svg>
<div style="left:850px;top:505px;width:248px;height:1px;background:#383838"></div>
<div style="left:854px;top:481.5px;width:85px;height:22px;border:1px solid #656565;border-radius:3px;background:#505050"></div>
<svg style="left:861.500px;top:486.500px" width="11" height="11" viewBox="0 0 11 11"><circle cx="4.300" cy="4.300" r="3.200" fill="none" stroke="#e6e6e6" stroke-width="1.700"/><path d="M6.800 6.800l3.200 3.200" stroke="#e6e6e6" stroke-width="2" stroke-linecap="round"/></svg>
<div class="t" style="left:877.500px;top:485px;font-size:12px;color:#8f8f8f;">종류</div>
<svg style="left:928px;top:490.500px" width="7.500" height="4.500" viewBox="0 0 8 5"><path d="M.5.5L4 4 7.500.5" stroke="#6c6c6c" stroke-width="1.200" fill="none"/></svg>
<svg style="left:955.500px;top:486.300px" width="13" height="10.500" viewBox="0 0 13 10.500"><rect x=".6" y=".6" width="11.800" height="9.300" fill="none" stroke="#e2e2e2" stroke-width="1.200"/><path d="M2.200 8.300l2.600-3.600 1.900 2.200 1.500-1.500 2.600 2.900z" fill="#e2e2e2"/></svg>
<svg style="left:981px;top:486px" width="11.500" height="11.500" viewBox="0 0 16 16"><circle cx="8" cy="8" r="7" fill="none" stroke="#e2e2e2" stroke-width="1.700"/><path d="M13 3A7 7 0 0 1 3 13z" fill="#e2e2e2"/></svg>
<div class="t" style="left:1005.500px;top:482.800px;font-family:'Liberation Serif',serif;font-weight:bold;font-size:15.500px;color:#e2e2e2;line-height:1.150">T</div>
<svg style="left:1028.500px;top:485.500px" width="12" height="12" viewBox="0 0 12 12"><rect x="1.600" y="1.600" width="8.800" height="8.800" fill="none" stroke="#e2e2e2" stroke-width="1.200"/><g fill="#535353" stroke="#e2e2e2" stroke-width=".9"><rect x=".45" y=".45" width="2.300" height="2.300"/><rect x="9.250" y=".45" width="2.300" height="2.300"/><rect x=".45" y="9.250" width="2.300" height="2.300"/><rect x="9.250" y="9.250" width="2.300" height="2.300"/></g></svg>
<svg style="left:1053.500px;top:485.500px" width="11" height="12" viewBox="0 0 11 12"><path d="M3.600.6h4L10.400 3.400v6.800H3.600z" fill="none" stroke="#e2e2e2" stroke-width="1.200"/><path d="M7.400.6v3h3" fill="none" stroke="#e2e2e2" stroke-width="1"/><rect x="0" y="5.500" width="6" height="6.500" fill="#e2e2e2"/></svg>
<div style="left:1080px;top:483.5px;width:9.5px;height:18px;border:1px solid #6a6a6a;border-radius:5px;background:#4a4a4a"></div>
<div style="left:1081px;top:482.5px;width:7.5px;height:7.5px;background:#e4e4e4;border-radius:50%"></div>
<div style="left:850px;top:534px;width:248px;height:1px;background:#383838"></div>
<div style="left:854px;top:511px;width:116.5px;height:21.5px;border:1px solid #5f5f5f;border-radius:3px;background:#505050"></div>
<div class="t" style="left:863.500px;top:514px;font-size:12px;color:#8f8f8f;">표준</div>
<svg style="left:959.500px;top:520px" width="7.500" height="4.500" viewBox="0 0 8 5"><path d="M.5.5L4 4 7.500.5" stroke="#666" stroke-width="1.200" fill="none"/></svg>
<div class="t" style="left:979px;top:513.500px;font-size:12px;color:#8f8f8f;letter-spacing:1px"><span style="letter-spacing:0.7px">불투명도</span>:</div>
<div style="left:1034.5px;top:511px;width:54px;height:18px;border:1px solid #636363;border-radius:3px;background:#4a4a4a"></div>
<div style="left:1072.5px;top:511px;width:1px;height:18px;background:#636363"></div>
<div class="t" style="left:1038.500px;top:513.5px;font-size:12px;color:#787878;letter-spacing:-0.55px">100%</div>
<svg style="left:1077px;top:517.5px" width="8" height="5" viewBox="0 0 8 5"><path d="M.5.5L4 4 7.500.5" stroke="#dcdcdc" stroke-width="1.300" fill="none"/></svg>
<div class="t" style="left:857px;top:543px;font-size:12px;color:#8f8f8f;letter-spacing:1.500px"><span style="letter-spacing:0.9px">잠그기</span>:</div>
<svg style="left:906px;top:543px" width="11" height="11" viewBox="0 0 11 11"><rect width="11" height="11" fill="#e2e2e2"/><g fill="#3a3a3a"><rect x="1" y="1" width="3" height="3"/><rect x="7" y="1" width="3" height="3"/><rect x="4" y="4" width="3" height="3"/><rect x="1" y="7" width="3" height="3"/><rect x="7" y="7" width="3" height="3"/></g></svg>
<svg style="left:926.500px;top:541px" width="14.500" height="14.500" viewBox="0 0 20 20"><path d="M17.600 1.800c1.200.8.900 2-.1 3.300L12 12.600 8.800 10l6.200-7.300c1-1.200 1.800-1.500 2.600-.9z" fill="#e2e2e2"/><path d="M8 10.900l3.200 2.700c-.4 3.200-3.400 5-9.200 4.500 2.800-1.300 3-4.900 6-7.200z" fill="#e2e2e2"/></svg>
<svg style="left:949px;top:542px" width="13" height="13" viewBox="0 0 16 16"><path d="M8 0l3 3.400H8.800v3.800h3.800V5L16 8l-3.400 3V8.800H8.800v3.800H11L8 16l-3-3.400h2.200V8.800H3.400V11L0 8l3.400-3v2.200h3.800V3.400H5z" fill="#e2e2e2"/></svg>
<svg style="left:971px;top:542px" width="14.500" height="14" viewBox="0 0 14.500 14" fill="none" stroke="#e2e2e2"><path d="M2.800 3.200h9v8.400h-9z" stroke-width="1.300"/><path d="M2.800 0v14M11.800 0v14M0 3.200h14.500M0 11.600h14.500" stroke-width="1" stroke-dasharray="1.600 9.800 1.600 20"/><path d="M9.500 1.500l3 2.500" stroke-width="1"/></svg>
<svg style="left:994.500px;top:541.500px" width="11" height="13" viewBox="0 0 11 13"><path d="M2.800 6V4a2.700 2.700 0 0 1 5.400 0v2" fill="none" stroke="#e2e2e2" stroke-width="1.500"/><rect x=".3" y="5.600" width="10.400" height="7.400" rx="1" fill="#e2e2e2"/><rect x="4.700" y="8" width="1.600" height="2.600" fill="#535353"/></svg>
<div class="t" style="left:1016px;top:543px;font-size:12px;color:#8f8f8f;">칠:</div>
<div style="left:1034.5px;top:540px;width:54px;height:18px;border:1px solid #636363;border-radius:3px;background:#4a4a4a"></div>
<div style="left:1072.5px;top:540px;width:1px;height:18px;background:#636363"></div>
<div class="t" style="left:1038.500px;top:542.5px;font-size:12px;color:#787878;letter-spacing:-0.55px">100%</div>
<svg style="left:1077px;top:546.5px" width="8" height="5" viewBox="0 0 8 5"><path d="M.5.5L4 4 7.500.5" stroke="#dcdcdc" stroke-width="1.300" fill="none"/></svg>
<div style="left:850px;top:566px;width:232px;height:220px;background:#4a4a4a"></div>
<div style="left:1082px;top:566px;width:16px;height:220px;background:#484848"></div>
<div style="left:850px;top:566px;width:232px;height:39px;background:#535353"></div>
<div style="left:880px;top:566px;width:1px;height:39px;background:#484848"></div>
<div style="left:881px;top:566px;width:201px;height:39px;background:#6b6b6b"></div>
<div style="left:850px;top:606px;width:232px;height:40px;background:#535353"></div>
<div style="left:880px;top:606px;width:1px;height:40px;background:#484848"></div>
<div style="left:850px;top:647px;width:232px;height:40px;background:#535353"></div>
<div style="left:880px;top:647px;width:1px;height:40px;background:#484848"></div>
<div style="left:850px;top:688px;width:232px;height:24.5px;background:#535353"></div>
<div style="left:880px;top:688px;width:1px;height:24.5px;background:#484848"></div>
<div style="left:850px;top:713.5px;width:232px;height:40.5px;background:#535353"></div>
<div style="left:880px;top:713.5px;width:1px;height:40.5px;background:#484848"></div>
<div style="left:858.5px;top:621px;width:12.5px;height:12.5px;border:1px solid #636363"></div>
<div style="left:858.5px;top:662.5px;width:12.5px;height:12.5px;border:1px solid #636363"></div>
<div style="left:858.5px;top:694.5px;width:12.5px;height:12.5px;border:1px solid #636363"></div>
<div style="left:858.5px;top:727.5px;width:12.5px;height:12.5px;border:1px solid #636363"></div>
<svg style="left:859px;top:583px" width="13.500" height="9" viewBox="0 0 13.500 9"><path d="M0 4.500C2 1.500 4.200 0 6.750 0s4.750 1.500 6.750 4.500C11.500 7.500 9.300 9 6.750 9S2 7.500 0 4.500z" fill="#e6e6e6"/><circle cx="6.750" cy="4.300" r="2.700" fill="#535353"/><circle cx="6.750" cy="4.300" r="1.400" fill="#e6e6e6"/></svg>
<div class="t" style="left:926.500px;top:580.500px;font-size:12px;color:#ededed">레이어<span style="font-size:10.500px;margin-left:6.200px;letter-spacing:-0.1px">13</span></div>
<div class="t" style="left:926.500px;top:621.300px;font-size:12px;color:#ededed">레이어<span style="font-size:10.500px;margin-left:6.200px;letter-spacing:-0.1px">17</span></div>
<div class="t" style="left:926.500px;top:662.300px;font-size:12px;color:#ededed">레이어<span style="font-size:10.500px;margin-left:6.200px;letter-spacing:-0.1px">16</span></div>
<div class="t" style="left:924.500px;top:694.500px;font-size:12px;color:#ededed">그룹<span style="font-size:10.500px;margin-left:6.200px;letter-spacing:-0.1px">1</span></div>
<div class="t" style="left:926.500px;top:728px;font-size:12px;color:#ededed;">배경</div>
<svg style="left:884.500px;top:694.500px" width="5" height="11" viewBox="0 0 5 11"><path d="M.6.6l3.800 4.900L.6 10.400" stroke="#cfcfcf" stroke-width="1.100" fill="none"/></svg>
<svg style="left:896px;top:696.200px" width="14.500" height="11" viewBox="0 0 14.500 11"><path d="M0 0h5.500l1 1.400H0zM0 2.200h14.500V11H0z" fill="#d8d8d8"/></svg>
<svg style="left:1056px;top:728.500px" width="10.500" height="12" viewBox="0 0 10.500 12"><path d="M2.800 5.200V3.600a2.450 2.450 0 0 1 4.900 0v1.600" fill="none" stroke="#dcdcdc" stroke-width="1.100"/><rect x=".6" y="5.200" width="9.300" height="6.200" fill="none" stroke="#dcdcdc" stroke-width="1.100"/><rect x="4.500" y="7.600" width="1.500" height="1.600" fill="#dcdcdc"/></svg>
<div style="left:850px;top:786px;width:248px;height:25px;background:#535353;border-top:1px solid #383838"></div>
<svg style="left:896px;top:795px" width="14" height="7" viewBox="0 0 14 7" fill="none" stroke="#858585" stroke-width="1.400"><path d="M6 .7H3.500a2.800 2.800 0 0 0 0 5.600H6M8 .7h2.500a2.800 2.800 0 0 1 0 5.600H8M4 3.500h6"/></svg>
<div class="t" style="left:924px;top:789.500px;font-style:italic;font-size:14.500px;color:#dadada;letter-spacing:-0.6px;line-height:1.150">fx</div>
<svg style="left:936px;top:805px" width="4" height="2.500" viewBox="0 0 4 2.500"><path d="M0 0h4L2 2.500z" fill="#dadada"/></svg>
<svg style="left:950px;top:793.500px" width="13.500" height="10.500" viewBox="0 0 13.500 10.500"><rect width="13.500" height="10.500" fill="#dadada"/><circle cx="6.750" cy="5.250" r="3.100" fill="#535353"/></svg>
<svg style="left:978.500px;top:794px" width="12.500" height="12.500" viewBox="0 0 16 16"><circle cx="8" cy="8" r="7" fill="none" stroke="#dadada" stroke-width="1.600"/><path d="M13 3A7 7 0 0 1 3 13z" fill="#dadada"/></svg>
<svg style="left:990.500px;top:805px" width="4" height="2.500" viewBox="0 0 4 2.500"><path d="M0 0h4L2 2.500z" fill="#dadada"/></svg>
<svg style="left:1004.500px;top:793px" width="13" height="11" viewBox="0 0 14.500 11"><path d="M0 0h5.500l1 1.400H0zM0 2.200h14.500V11H0z" fill="#dadada"/></svg>
<svg style="left:1032.500px;top:793px" width="12" height="12" viewBox="0 0 12 12" fill="none" stroke="#dadada"><rect x=".65" y=".65" width="10.700" height="10.700" stroke-width="1.300"/><path d="M6 3.200v5.600M3.200 6h5.600" stroke-width="1.200"/></svg>
<svg style="left:1058.500px;top:792.500px" width="11.500" height="13" viewBox="0 0 11.500 13" fill="none" stroke="#dadada"><path d="M0 2.600h11.500M3.800 2.400V.6h3.900v1.800" stroke-width="1.200"/><path d="M1.500 2.800l.6 9.600h7.300l.6-9.600" stroke-width="1.300"/><path d="M4.100 4.600v6M5.750 4.600v6M7.400 4.600v6" stroke-width="1"/></svg>
<div style="left:883.5px;top:570px;width:32.5px;height:32.5px;background:#2a2a2a"></div>
<svg style="left:884.500px;top:571px;overflow:hidden" width="30.500" height="30.500" viewBox="0 0 30.500 30.500"><rect width="31" height="31" fill="url(#chk4)"/><use href="#art" width="30.500" height="30.500"/></svg>
<svg style="left:881.500px;top:568px" width="36.500" height="36" viewBox="0 0 36.500 36" fill="none" stroke="#fff" stroke-width="1.300"><path d="M.65 11V.65H12M24.500 .65H35.850V11M35.850 25V35.350H24.500M12 35.350H.65V25"/></svg>
<div style="left:884px;top:611.5px;width:32px;height:32px;background:#2a2a2a"></div>
<svg style="left:885px;top:612.500px;overflow:hidden" width="30" height="30" viewBox="0 0 30 30"><rect width="30" height="30" fill="url(#chk4)"/><g><path d="M5 5.500l2-1.500 1 1.800 2-.4-1 2 1.500 1.200-2 .3z" fill="#ffab73"/><rect x="4" y="8.800" width="7" height="2.200" rx="1" fill="#3e3e3e"/><path d="M4.500 8.500c1-2 3-2 3.500 0z" fill="#ffbe4f"/><rect x="5" y="12.200" width="2" height="1.600" fill="#5a36c8"/><rect x="9.500" y="5" width="1.600" height="1.600" fill="#ffab73"/><rect x="12" y="3.500" width="1.400" height="1.400" fill="#7b68ff"/><rect x="11.500" y="7" width="1.200" height="1.200" fill="#ffab73"/></g></svg>
<div style="left:884px;top:652.5px;width:32px;height:32px;background:#2a2a2a"></div>
<svg style="left:885px;top:653.500px;overflow:hidden" width="30" height="30" viewBox="0 0 30 30"><rect width="30" height="30" fill="url(#chk4)"/><g><path d="M20 5.500c1-2.500 5-2.500 6.500-.5l1.500 1.200-8.500.8z" fill="#2b2233"/><path d="M15 8l1.500 5-1.500 3z" fill="#ffa9a0"/><rect x="18" y="11" width="8" height="5" rx="1.500" fill="#3d2578"/><rect x="19" y="13.500" width="8" height="4" rx="1.500" fill="#c5f0a4"/><circle cx="20.500" cy="13" r="1.200" fill="#111"/><circle cx="24" cy="13" r="1.200" fill="#111"/><rect x="21" y="11.200" width="3" height="1" fill="#ffbe4f"/><path d="M5 20l3-4 2 3 2 5-3 2-3-1z" fill="#b9f3fb"/><path d="M3 18l3 3-2 4z" fill="#5a36c8"/><path d="M9 21l3 1 1 4-4 0z" fill="#50468a"/><rect x="4" y="26" width="2" height="1.500" fill="#ffab73"/><rect x="13" y="24" width="1.600" height="1.600" fill="#ffab73"/><rect x="24" y="22" width="1.500" height="1.500" fill="#ffab73"/><rect x="21" y="26" width="1.500" height="1.500" fill="#ffab73"/><rect x="17" y="19" width="1.200" height="3" fill="#5a36c8"/><rect x="15" y="24" width="2" height="2" fill="#4e4289"/></g></svg>
<div style="left:884px;top:718.5px;width:32px;height:32px;background:#fff;border:1px solid #2a2a2a"></div>
</div>
</body></html>
